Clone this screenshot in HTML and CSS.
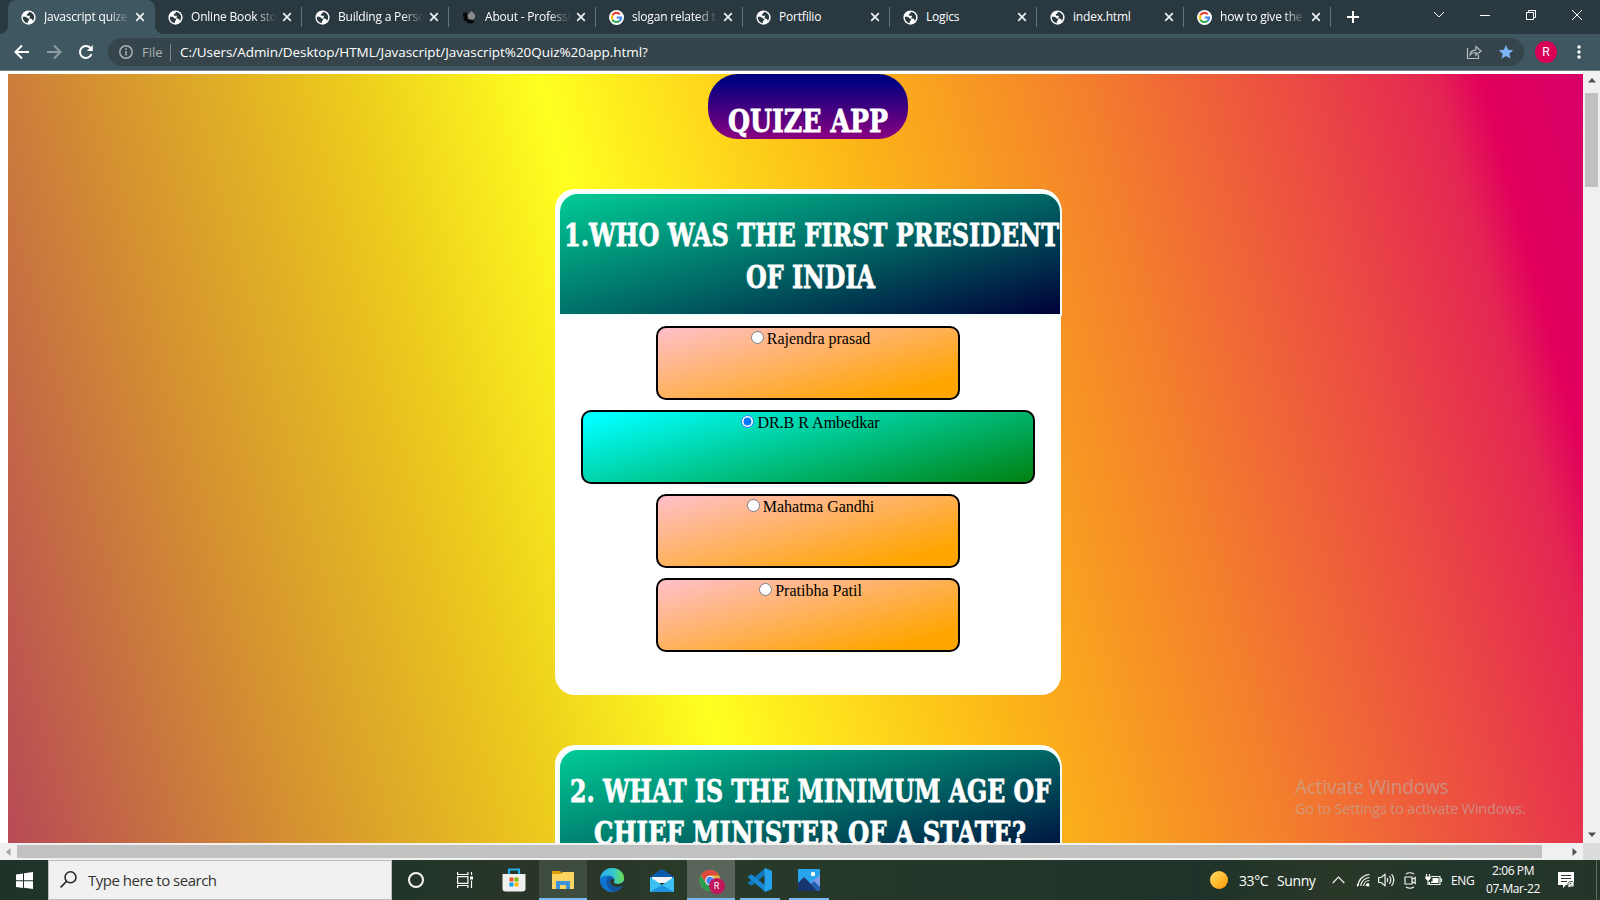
FILE: index.html
```html
<!DOCTYPE html>
<html lang="en">
<head>
<meta charset="utf-8">
<title>Javascript quize app</title>
<link rel="stylesheet" href="styles.css">
</head>
<body>
<svg class="defs" width="0" height="0">
  <defs>
    <symbol id="globe" viewBox="0 0 16 16"><circle cx="8" cy="8" r="7.600" fill="#fff"/><path d="M2 7.300C4.200 7 5.800 7.200 6.600 8.600c.5.800 2 .4 2.200 1.500.2 1-1.300 1-1.400 2l-.2 1.900C4 13.700 1.600 10.700 2 7.300z" fill="#2a383f"/><path d="M6.200 5.600C5.800 4 8.600 4.300 8.300 2.200c2.500-.2 5 1.700 5.600 4.300.3 1.700-.1 3.500-1 4.900-.6-.2-.5-1.400-1.300-1.900-.9-.5-2.200.1-2.600-1C8.700 7.300 10 7.300 9.700 6.500 9.200 5.600 6.800 6.900 6.200 5.600z" fill="#2a383f"/></symbol>
    <symbol id="google" viewBox="0 0 16 16"><circle cx="8" cy="8" r="8" fill="#fff"/><g fill="none" stroke-width="2.300"><path d="M11.500 4.500A4.900 4.900 0 0 0 3.700 5.700" stroke="#ea4335"/><path d="M3.700 5.700a4.900 4.900 0 0 0 0 4.600" stroke="#fbbc05"/><path d="M3.700 10.300a4.900 4.900 0 0 0 7.500 1.300" stroke="#34a853"/><path d="M11.200 11.600A4.900 4.900 0 0 0 12.900 8H8.200" stroke="#4285f4"/></g></symbol>
    <symbol id="x" viewBox="0 0 10 10"><path d="M1.200 1.200l7.600 7.600M8.800 1.200L1.200 8.800" stroke="#eef2f3" stroke-width="1.700"/></symbol>
  </defs>
</svg>

<header class="tabs">
  <div class="tab active"><svg class="fav"><use href="#globe"/></svg><span class="name fade">Javascript quize</span><svg class="close"><use href="#x"/></svg></div>
  <div class="tab"><svg class="fav"><use href="#globe"/></svg><span class="name fade">Online Book sto</span><svg class="close"><use href="#x"/></svg></div>
  <div class="tab"><svg class="fav"><use href="#globe"/></svg><span class="name fade">Building a Perso</span><svg class="close"><use href="#x"/></svg></div>
  <div class="tab"><svg class="fav" viewBox="0 0 16 16"><g fill="#080b0d"><circle cx="3.500" cy="5" r="2.600"/><circle cx="4" cy="9.500" r="2.600"/><circle cx="7.500" cy="12" r="2.500"/><circle cx="11.500" cy="12.500" r="1.500"/></g><path d="M10 1l4 4-.5 4-3.500 2-3.500-2L6 5z" fill="#8b8b89"/><path d="M10 10v5" stroke="#080b0d"/></svg><span class="name fade">About - Professi</span><svg class="close"><use href="#x"/></svg></div>
  <div class="tab"><svg class="fav"><use href="#google"/></svg><span class="name fade">slogan related t</span><svg class="close"><use href="#x"/></svg></div>
  <div class="tab"><svg class="fav"><use href="#globe"/></svg><span class="name">Portfilio</span><svg class="close"><use href="#x"/></svg></div>
  <div class="tab"><svg class="fav"><use href="#globe"/></svg><span class="name">Logics</span><svg class="close"><use href="#x"/></svg></div>
  <div class="tab"><svg class="fav"><use href="#globe"/></svg><span class="name">index.html</span><svg class="close"><use href="#x"/></svg></div>
  <div class="tab"><svg class="fav"><use href="#google"/></svg><span class="name fade">how to give the</span><svg class="close"><use href="#x"/></svg></div>
  <svg class="plus" viewBox="0 0 12 12"><path d="M6 0v12M0 6h12" stroke="#fff" stroke-width="2"/></svg>
  <div class="controls">
    <svg viewBox="0 0 12 12"><path d="M1 3l5 5 5-5" /></svg>
    <svg viewBox="0 0 12 12"><path d="M1 6.500h10"/></svg>
    <svg viewBox="0 0 12 12"><path d="M1.500 3.500h7v7h-7zM3.500 3.500v-2h7v7h-2"/></svg>
    <svg viewBox="0 0 12 12"><path d="M1 1l10 10M11 1L1 11"/></svg>
  </div>
</header>

<div class="toolbar">
  <svg class="nav" viewBox="0 0 16 16"><path d="M15 8H2.500M8 1.500L1.500 8 8 14.500" stroke="#fff"/></svg>
  <svg class="nav" viewBox="0 0 16 16"><path d="M1 8h12.500M8 1.500L14.500 8 8 14.500" stroke="#8b9ba1"/></svg>
  <svg class="nav" viewBox="0 0 16 16"><path d="M13.500 10.200A6 6 0 1 1 12.500 4" stroke="#fff"/><path d="M14.800 1v6h-6z" fill="#fff"/></svg>
  <div class="omnibox">
    <svg class="info" viewBox="0 0 14 14"><circle cx="7" cy="7" r="6.200"/><path d="M7 6v4.500M7 3.300v1.600"/></svg>
    <span class="scheme">File</span>
    <span class="url">C:/Users/Admin/Desktop/HTML/Javascript/Javascript%20Quiz%20app.html?</span>
    <svg class="share" viewBox="0 0 16 16"><path d="M1.500 4v10.500h11V11M4 11c.3-3.500 2.500-5 6-5.200V2.500L15 7l-5 4.300V8.500C7.500 8.500 5.500 9 4 11z"/></svg>
    <svg class="star" viewBox="0 0 16 16"><path d="M8 1l2.100 4.800 5.100.5-3.900 3.400 1.200 5.100L8 12.100l-4.500 2.700 1.200-5.100L.8 6.300l5.100-.5z" fill="#7cb3fa"/></svg>
  </div>
  <span class="avatar">R</span>
  <svg class="dots" viewBox="0 0 4 14"><circle cx="2" cy="2" r="1.700"/><circle cx="2" cy="7" r="1.700"/><circle cx="2" cy="12" r="1.700"/></svg>
</div>

<div class="viewport">
  <main class="page">
    <div class="backdrop">
      <h1 class="title"><svg class="lettering" width="200" height="42"><text x="20" y="31" textLength="160" lengthAdjust="spacingAndGlyphs">QUIZE APP</text></svg></h1>
      <section class="card">
        <h2 class="question"><svg class="lettering" width="500" height="84"><text x="4" y="32" textLength="495" lengthAdjust="spacingAndGlyphs">1.WHO WAS THE FIRST PRESIDENT</text><text x="186" y="74" textLength="129" lengthAdjust="spacingAndGlyphs">OF INDIA</text></svg></h2>
        <label class="option"><input type="radio" name="q1">Rajendra prasad</label>
        <label class="option picked"><input type="radio" name="q1" checked>DR.B R Ambedkar</label>
        <label class="option"><input type="radio" name="q1">Mahatma Gandhi</label>
        <label class="option"><input type="radio" name="q1">Pratibha Patil</label>
      </section>
      <section class="card">
        <h2 class="question"><svg class="lettering" width="500" height="84"><text x="10" y="32" textLength="481" lengthAdjust="spacingAndGlyphs">2. WHAT IS THE MINIMUM AGE OF</text><text x="34" y="74" textLength="432" lengthAdjust="spacingAndGlyphs">CHIEF MINISTER OF A STATE?</text></svg></h2>
      </section>
    </div>
  </main>
  <div class="vbar">
    <svg class="arrow" viewBox="0 0 8 5"><path d="M4 0l4 4.500H0z" fill="#505050"/></svg>
    <div class="vthumb"></div>
    <svg class="arrow down" viewBox="0 0 8 5"><path d="M0 .5h8L4 5z" fill="#505050"/></svg>
  </div>
  <div class="watermark"><div class="wm-big">Activate Windows</div><div class="wm-small">Go to Settings to activate Windows.</div></div>
</div>
<div class="hbar">
  <svg class="harrow" viewBox="0 0 5 8"><path d="M4.500 0v8L0 4z" fill="#a3a3a3"/></svg>
  <div class="hthumb"></div>
  <svg class="harrow right" viewBox="0 0 5 8"><path d="M.5 0v8L5 4z" fill="#505050"/></svg>
  <div class="corner"></div>
</div>

<footer class="taskbar">
  <div class="start"><svg width="17" height="17" viewBox="0 0 17 17"><path d="M0 2.400l7-1v6.800H0zM8 1.200L17 0v8.200H8zM0 9.200h7V16l-7-1zM8 9.200h9V17l-9-1.200z" fill="#fff"/></svg></div>
  <div class="search"><svg width="17" height="17" viewBox="0 0 17 17"><circle cx="10.500" cy="6.300" r="5.500"/><path d="M6.600 10.300L.6 16.400"/></svg><span>Type here to search</span></div>
  <div class="apps">
    <div class="app"><svg width="18" height="18" viewBox="0 0 18 18"><circle cx="9" cy="9" r="7" fill="none" stroke="#f5f5f5" stroke-width="2"/></svg></div>
    <div class="app"><svg width="16" height="16" viewBox="0 0 16 16" fill="none" stroke="#fff" stroke-width="1.200"><path d="M.6 0v2.500h10.300V0M.6 16v-2.500h10.300V16M.6 4.600h10.300v6.800H.6zM14.500 0v3M14.500 8.500V16"/><path d="M13 4.500h3v3h-3z" fill="#fff" stroke="none"/></svg></div>
    <div class="app"><svg width="24" height="24" viewBox="0 0 24 24"><path d="M7 6V1.500h10V6" fill="none" stroke="#1eaee9" stroke-width="2.200"/><path d="M.5 6h23v14.500a3 3 0 0 1-3 3h-17a3 3 0 0 1-3-3z" fill="#f0f0f0"/><path d="M7.500 9.500h4v4h-4z" fill="#f25022"/><path d="M12.500 9.500h4v4h-4z" fill="#7fba00"/><path d="M7.500 14.500h4v4h-4z" fill="#00a4ef"/><path d="M12.500 14.500h4v4h-4z" fill="#ffb900"/></svg></div>
    <div class="app open lit"><svg width="22" height="20" viewBox="0 0 22 20"><path d="M0 1h8l2 2v4H0z" fill="#e39c0b"/><path d="M0 4h9l2-2h11v17H0z" fill="#fcd462"/><path d="M4 19v-8h14v8h-4v-4H8v4z" fill="#3d92dc"/></svg></div>
    <div class="app"><svg width="24" height="24" viewBox="0 0 24 24"><defs><linearGradient id="eg"><stop offset="0" stop-color="#2baee5"/><stop offset=".55" stop-color="#35c6cf"/><stop offset="1" stop-color="#6be04c"/></linearGradient></defs><circle cx="12" cy="12" r="12" fill="#0f74cf"/><path d="M0 11C1 4 6 0 12 0c7 0 12 4.500 12 10 0 4-3 6-6.500 6-3 0-4-1.200-3.300-2.500C15.500 11 13 7.500 8.500 7.500 4.500 7.500 1 9 0 11z" fill="url(#eg)"/><path d="M8.500 9C4 13 7 22 14 23.800c4-.5 7-3 8.500-5.800-4 2-12 2-12.500-4 0-2 1-3 2-3.500C11.500 9.200 10 8.500 8.500 9z" fill="#12549f"/><path d="M14.200 13.500c-.7 1.300.3 2.500 3.300 2.500 3 0 5-1 6-3l.5 3-1.500 2c-5 2-12 1-12.300-4 0-1.500.8-3 2.300-3.500 1.500 0 2.200 1.700 1.700 3z" fill="#28382a"/></svg></div>
    <div class="app mail"><svg width="24" height="23" viewBox="0 0 24 23"><path d="M0 8l12-8 12 8v5H0z" fill="#0b5cad"/><path d="M2 8h20v6H2z" fill="#f4f5f7"/><path d="M0 8l12 8 12-8v15H0z" fill="#3cc0f3"/><path d="M12 16l12 7H0z" fill="#1c93de"/></svg></div>
    <div class="app open focus"><svg width="23" height="23" viewBox="0 0 23 23"><circle cx="11" cy="11.500" r="10.500" fill="#e2b93b"/><path d="M1.900 6.200A10.500 10.500 0 0 1 20.200 6.500H11l-4.500 7.500z" fill="#dc4b3e"/><path d="M1.900 6.200A10.500 10.500 0 0 0 11 22l4.500-8-9 0z" fill="#2a9d50"/><circle cx="11" cy="11.500" r="4.800" fill="#f6f6f6"/><circle cx="11" cy="11.500" r="3.700" fill="#4587ea"/></svg><span class="badge">R</span></div>
    <div class="app open narrow"><svg width="24" height="24" viewBox="0 0 24 24"><path d="M17.500 0v6.500L4.500 17 3 17.500 0 15.500v-1z" fill="#0f77bd"/><path d="M0 9.500v-1L3 6.500l1.500.5 13 10.500V24z" fill="#1687d2"/><path d="M17 0l7 3v18l-7 3-.5-1V1z" fill="#26a2ec"/></svg></div>
    <div class="app open narrow"><svg width="22" height="22" viewBox="0 0 22 22"><path d="M0 0h22v22H0z" fill="#27a4ea"/><path d="M12 14l10-8v16H12z" fill="#7f9ce8"/><path d="M0 14l6-6 14 14H0z" fill="#17366f"/><path d="M13 15l3-3 6 6v4h-2z" fill="#2460b0"/><circle cx="15" cy="5" r="2.200" fill="#fff"/></svg></div>
  </div>
  <div class="tray">
    <span class="sun"></span>
    <span class="temp">33°C</span><span class="sunny">Sunny</span>
    <svg class="up" width="13" height="8" viewBox="0 0 13 8"><path d="M.7 7l5.800-6 5.800 6"/></svg>
    <svg class="wifi" width="13" height="14" viewBox="0 0 13 14"><path d="M1 13A12 12 0 0 1 12.500 1.500M3.800 13a9 9 0 0 1 8.700-8.500M6.600 13a6 6 0 0 1 5.900-5.500" /><circle cx="11" cy="12" r="1.500" fill="#fff" stroke="none"/><path d="M.5 11v2.500M9 13a3 3 0 0 1 3-2.500"/></svg>
    <svg class="sound" width="17" height="14" viewBox="0 0 17 14"><path d="M.6 4.500h2.600L7 1.200v11.600L3.200 9.500H.6zM9 4.800q1.500 2.200 0 4.400M11.300 3q3 4 0 8M13.600 1.200q4.400 5.800 0 11.600"/></svg>
    <svg class="meet" width="12" height="17" viewBox="0 0 12 17"><path d="M1 5h7v7H1zM8 7.500l3.200-2v6L8 9.500M2 2q4-2.500 8 0M2 15q4 2.500 8 0"/></svg>
    <svg class="battery" width="17" height="12" viewBox="0 0 17 12"><path d="M6 2.500h9v8H4.500V8M15.500 5h1v3M1.500 0v2.500M4.500 0v2.500M3 6v5"/><path d="M.3 2.500h5.400v2L4 6.300H2L.3 4.500zM7.500 4h6v5H6V7.500h1.500z" fill="#fff" stroke="none"/></svg>
    <span class="lang">ENG</span>
    <div class="clock"><span>2:06 PM</span><span>07-Mar-22</span></div>
    <svg class="note" width="17" height="17" viewBox="0 0 17 17"><path d="M0 0h16v13H8l-3 3v-3H0z" fill="#fff"/><path d="M3 3.500h10M3 6.500h10M3 9.500h6" stroke="#26372b" stroke-width="1.200"/><circle cx="13" cy="12.500" r="3.500" fill="#26372b"/><path d="M11 11q2-1.500 4 0v3h-4zM10.500 15l5-5" stroke="#fff" fill="none"/></svg>
    <span class="edge"></span>
  </div>
</footer>
</body>
</html>
```
FILE: styles.css
```css
* { box-sizing: border-box; }
body {
  margin: 0;
  width: 1600px;
  height: 900px;
  overflow: hidden;
  display: flex;
  flex-direction: column;
  font-family: "Open Sans", "Noto Sans", sans-serif;
  background: #fff;
}
svg { display: block; flex: none; overflow: visible; }
.defs { position: absolute; }

/* tab strip */
.tabs { height: 34px; flex: none; display: flex; align-items: center; padding-left: 8px; background: #2a383f; }
.tab { width: 147px; height: 34px; flex: none; display: flex; align-items: center; padding-left: 13px; position: relative; }
.tab:not(.active)::after { content: ""; position: absolute; right: 0; top: 7px; width: 1px; height: 20px; background: #65747a; }
.tab.active { background: #3f5761; border-radius: 8px 8px 0 0; }
.tab.active::before, .tab.active::after { content: ""; position: absolute; bottom: 0; width: 8px; height: 8px; }
.tab.active::before { left: -8px; background: radial-gradient(circle at 0 0, #2a383f 7.500px, #3f5761 8px); }
.tab.active::after { right: -8px; background: radial-gradient(circle at 100% 0, #2a383f 7.500px, #3f5761 8px); }
.fav { width: 15px; height: 15px; }
.name {
  width: 88px;
  margin-left: 8px;
  white-space: nowrap;
  font-size: 12px;
  line-height: 18px;
  letter-spacing: -0.200px;
  color: #fff;
}
.name.fade {
  -webkit-mask-image: linear-gradient(90deg, #000 64px, transparent 86px);
  mask-image: linear-gradient(90deg, #000 64px, transparent 86px);
}
.close { width: 10px; height: 10px; margin-left: 3px; }
.plus { width: 12px; height: 12px; margin-left: 16px; }
.controls { display: flex; gap: 34px; margin-left: 74px; padding-bottom: 5px; }
.controls svg { width: 12px; height: 12px; fill: none; stroke: #fff; stroke-width: 1; }

/* toolbar */
.toolbar { height: 37px; flex: none; display: flex; align-items: center; padding-left: 14px; background: #3f5761; border-bottom: 1px solid #75848b; }
.nav { width: 16px; height: 16px; margin-right: 16px; fill: none; stroke-width: 2; }
.omnibox { width: 1416px; height: 28px; margin-left: -2px; display: flex; align-items: center; padding-left: 11px; border-radius: 14px; background: #35454b; font-size: 13.500px; }
.info { width: 14px; height: 14px; fill: none; stroke: #a9b2b6; stroke-width: 1.500; }
.scheme { width: 29px; margin-left: 9px; color: #a9b2b6; font-size: 13px; letter-spacing: 0; line-height: 17px; border-right: 1px solid #7b878c; }
.url { width: 480px; margin-left: 9px; color: #fff; white-space: nowrap; letter-spacing: -0.060px; }
.share { width: 16px; height: 16px; margin-left: 806px; fill: none; stroke: #b6bec1; stroke-width: 1.200; }
.star { width: 16px; height: 16px; margin-left: 16px; }
.avatar { width: 22px; height: 22px; margin-left: 11px; border-radius: 50%; background: #d90056; color: #fff; font: 12px/22px Roboto, sans-serif; text-align: center; }
.dots { width: 4px; height: 14px; margin-left: 20px; fill: #fff; }

/* document area */
.viewport { height: 772px; flex: none; display: flex; position: relative; }
.page { width: 1583px; height: 772px; padding: 3px 0 0 8px; overflow: hidden; font-family: "Liberation Serif", serif; }
.backdrop {
  height: 769px;
  display: flex;
  flex-direction: column;
  align-items: flex-start;
  background: linear-gradient(75deg, #b74a56 0, #d59230 283px, #eccb1c 525px, #ffff20 712px, #fcb817 988px, #f4802c 1230px, #ea4446 1465px, #e42652 1575px, #e1005c 1622px, #d80068 1720px);
}
.title { width: 200px; height: 65px; flex: none; margin: 0 0 0 700px; padding-top: 27px; border-radius: 30px; background: linear-gradient(#000080 10%, #8b0080); }
.lettering { fill: #fff; stroke: #fff; stroke-width: 0.800px; font: bold 31px "DejaVu Serif", serif; }
.card { width: 506px; height: 506px; flex: none; margin: 50px 0 0 547px; padding-top: 3px; border-radius: 20px; background: #fff; display: flex; flex-direction: column; align-items: center; }
.question { width: 504px; height: 124px; flex: none; margin: 0 -1px 0 3px; padding-top: 20px; border: 2px solid #f0ffff; border-radius: 20px 20px 0 0; background: linear-gradient(165deg, #00cc96, #006b66 50%, #000038); align-self: flex-start; }
.option { width: 304px; height: 74px; flex: none; margin-top: 10px; border: 2px solid #000; border-radius: 10px; background: linear-gradient(165deg, #ffc0cb, #ffa500 87%); font-size: 16px; line-height: 18px; text-align: center; }
.option.picked { width: 454px; background: linear-gradient(165deg, #00ffff 5%, #00c48a 50%, #008010); }
.vbar { width: 17px; background: #f0f0f0; display: flex; flex-direction: column; align-items: center; padding-top: 7px; }
.arrow { width: 8px; height: 5px; }
.vthumb { width: 13px; height: 94px; margin-top: 10px; background: #c1c1c1; }
.arrow.down { margin-top: 645px; }
.watermark { position: absolute; left: 1295px; top: 703px; color: rgba(185, 178, 170, .6); white-space: nowrap; }
.wm-big { font-size: 19.200px; line-height: 26px; letter-spacing: -0.250px; }
.wm-small { font-size: 14.500px; line-height: 18px; letter-spacing: -0.200px; }
.hbar { height: 17px; flex: none; display: flex; align-items: center; padding-left: 6px; background: #f0f0f0; }
.harrow { width: 5px; height: 8px; }
.hthumb { width: 1525px; height: 13px; margin-left: 6px; background: #c1c1c1; }
.harrow.right { margin-left: 30px; }
.corner { width: 17px; height: 17px; margin-left: auto; background: #dcdcdc; }

/* taskbar */
.taskbar { height: 40px; flex: none; display: flex; background: linear-gradient(90deg, #1f3329 0, #21352a 380px, #2b3528 560px, #293a29 680px, #23362a 1000px, #20332a 1200px, #2a3827 1340px, #22362b 1450px, #253429); color: #fff; }
.start { width: 48px; padding: 12px 0 0 16px; }
.search { width: 344px; display: flex; padding: 10px 0 0 11px; border: 1px solid #bdbdbd; background: #f1f1f1; color: #333; font-size: 15px; line-height: 18px; letter-spacing: -0.500px; }
.search svg { fill: none; stroke: #222; stroke-width: 1.500; }
.search span { margin-left: 11px; }
.apps { width: 441px; display: grid; grid-template-columns: repeat(9, 49.100px); }
.app { width: 48px; display: flex; align-items: center; justify-content: center; position: relative; }
.app.mail { padding-left: 1px; }
.app.open::after { content: ""; position: absolute; left: 0; right: 0; bottom: 0; height: 2px; background: #76b9ed; }
.app.narrow::after { left: 4px; right: 4px; }
.lit { background: #3e4c3f; }
.focus { background: #59655a; }
.badge { position: absolute; left: 22px; top: 18px; width: 16px; height: 16px; border-radius: 50%; background: #c2185b; font: 9px/16px Roboto, sans-serif; text-align: center; }
.tray { flex: 1; display: flex; align-items: center; padding-left: 377px; font-size: 14px; letter-spacing: -0.400px; }
.tray svg { fill: none; stroke: #f2f2f2; stroke-width: 1.200; }
.sun { width: 18px; height: 18px; border-radius: 50%; background: linear-gradient(135deg, #ffe066, #ff9800); }
.temp { width: 38px; margin-left: 11px; }
.sunny { width: 44px; }
.tray .up { margin-left: 11px; }
.tray .wifi { margin-left: 12px; }
.tray .sound { margin-left: 8px; }
.tray .meet { margin-left: 9px; }
.tray .battery { margin-left: 9px; }
.lang { width: 26px; margin-left: 9px; font-size: 12px; }
.clock { width: 64px; margin-left: 4px; display: flex; flex-direction: column; align-items: center; font-size: 12px; line-height: 18px; }
.tray .note { margin-left: 13px; stroke: none; }
.edge { width: 1px; height: 40px; margin-left: 21px; background: #5b6b60; }
```
